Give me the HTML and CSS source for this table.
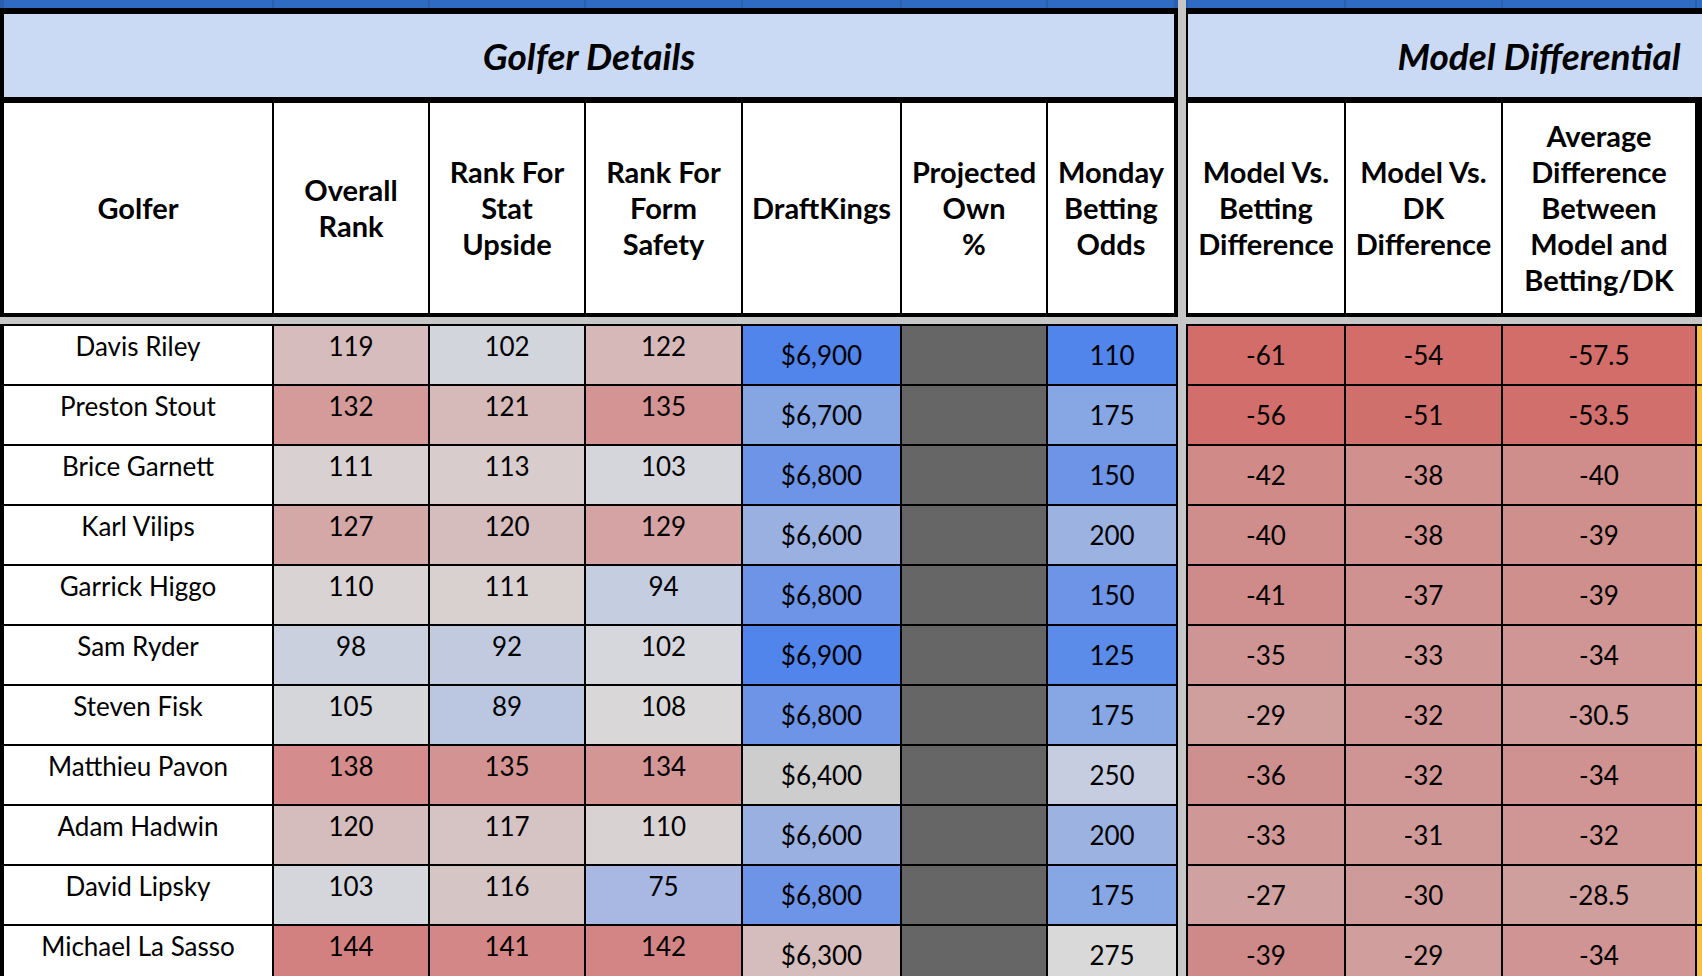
FILE: index.html
```html
<!DOCTYPE html>
<html lang="en">
<head>
<meta charset="utf-8">
<title>Golfer Details / Model Differential</title>
<link rel="stylesheet" href="styles.css">
</head>
<body>
<div class="sheet">
  <section class="block block-left">
    <div class="strip cols-left-head"><span></span><span></span><span></span><span></span><span></span><span></span><span></span></div>
    <div class="title title-left">Golfer Details</div>
    <div class="heads cols-left-head heads-left">
      <div class="h">Golfer</div>
      <div class="h">Overall<br>Rank</div>
      <div class="h">Rank For<br>Stat<br>Upside</div>
      <div class="h">Rank For<br>Form<br>Safety</div>
      <div class="h">DraftKings</div>
      <div class="h">Projected<br>Own<br>%</div>
      <div class="h">Monday<br>Betting<br>Odds</div>
    </div>
    <div class="spacer"></div>
    <div class="rows cols-left-data rows-left">
      <div class="c top name">Davis Riley</div>
      <div class="c top" style="background:#d6bcbc">119</div>
      <div class="c top" style="background:#d3d5dc">102</div>
      <div class="c top" style="background:#d6b8b8">122</div>
      <div class="c mid" style="background:#5185ec">$6,900</div>
      <div class="c own"></div>
      <div class="c mid" style="background:#5185ec">110</div>

      <div class="c top name">Preston Stout</div>
      <div class="c top" style="background:#d59b9b">132</div>
      <div class="c top" style="background:#d6baba">121</div>
      <div class="c top" style="background:#d49494">135</div>
      <div class="c mid" style="background:#85a5e3">$6,700</div>
      <div class="c own"></div>
      <div class="c mid" style="background:#86a6e4">175</div>

      <div class="c top name">Brice Garnett</div>
      <div class="c top" style="background:#d9d1d1">111</div>
      <div class="c top" style="background:#d8cccc">113</div>
      <div class="c top" style="background:#d4d6dc">103</div>
      <div class="c mid" style="background:#6d94e7">$6,800</div>
      <div class="c own"></div>
      <div class="c mid" style="background:#6d94e7">150</div>

      <div class="c top name">Karl Vilips</div>
      <div class="c top" style="background:#d5a8a8">127</div>
      <div class="c top" style="background:#d6bdbd">120</div>
      <div class="c top" style="background:#d5a3a3">129</div>
      <div class="c mid" style="background:#9ab0e0">$6,600</div>
      <div class="c own"></div>
      <div class="c mid" style="background:#9cb2e0">200</div>

      <div class="c top name">Garrick Higgo</div>
      <div class="c top" style="background:#d9d3d3">110</div>
      <div class="c top" style="background:#d9d0d0">111</div>
      <div class="c top" style="background:#c5cde0">94</div>
      <div class="c mid" style="background:#6d94e7">$6,800</div>
      <div class="c own"></div>
      <div class="c mid" style="background:#6d94e7">150</div>

      <div class="c top name">Sam Ryder</div>
      <div class="c top" style="background:#cad0de">98</div>
      <div class="c top" style="background:#c1cadf">92</div>
      <div class="c top" style="background:#d6d7dc">102</div>
      <div class="c mid" style="background:#5185ec">$6,900</div>
      <div class="c own"></div>
      <div class="c mid" style="background:#5b8cea">125</div>

      <div class="c top name">Steven Fisk</div>
      <div class="c top" style="background:#d5d6da">105</div>
      <div class="c top" style="background:#bbc7e1">89</div>
      <div class="c top" style="background:#d9d7d7">108</div>
      <div class="c mid" style="background:#6d94e7">$6,800</div>
      <div class="c own"></div>
      <div class="c mid" style="background:#86a6e4">175</div>

      <div class="c top name">Matthieu Pavon</div>
      <div class="c top" style="background:#d48c8c">138</div>
      <div class="c top" style="background:#d49393">135</div>
      <div class="c top" style="background:#d49595">134</div>
      <div class="c mid" style="background:#cdcdcd">$6,400</div>
      <div class="c own"></div>
      <div class="c mid" style="background:#c6cde0">250</div>

      <div class="c top name">Adam Hadwin</div>
      <div class="c top" style="background:#d6bdbd">120</div>
      <div class="c top" style="background:#d6c3c3">117</div>
      <div class="c top" style="background:#d9d2d2">110</div>
      <div class="c mid" style="background:#9ab0e0">$6,600</div>
      <div class="c own"></div>
      <div class="c mid" style="background:#9cb2e0">200</div>

      <div class="c top name">David Lipsky</div>
      <div class="c top" style="background:#d4d6dc">103</div>
      <div class="c top" style="background:#d6c5c5">116</div>
      <div class="c top" style="background:#a8b8e2">75</div>
      <div class="c mid" style="background:#6d94e7">$6,800</div>
      <div class="c own"></div>
      <div class="c mid" style="background:#86a6e4">175</div>

      <div class="c top name">Michael La Sasso</div>
      <div class="c top" style="background:#d38080">144</div>
      <div class="c top" style="background:#d38787">141</div>
      <div class="c top" style="background:#d38585">142</div>
      <div class="c mid" style="background:#d6bdbd">$6,300</div>
      <div class="c own"></div>
      <div class="c mid" style="background:#d9d9d9">275</div>
    </div>
  </section>

  <section class="block block-right">
    <div class="strip cols-right"><span></span><span></span><span></span><span></span></div>
    <div class="title title-right">Model Differential</div>
    <div class="heads cols-right heads-right">
      <div class="h">Model Vs.<br>Betting<br>Difference</div>
      <div class="h">Model Vs.<br>DK<br>Difference</div>
      <div class="h">Average<br>Difference<br>Between<br>Model and<br>Betting/DK</div>
      <div class="h h-next"></div>
    </div>
    <div class="spacer"></div>
    <div class="rows cols-right rows-right">
      <div class="c mid" style="background:#d36d6a">-61</div>
      <div class="c mid" style="background:#d36d6a">-54</div>
      <div class="c mid" style="background:#d36d6a">-57.5</div>
      <div class="c next"></div>

      <div class="c mid" style="background:#d26f6c">-56</div>
      <div class="c mid" style="background:#d0706d">-51</div>
      <div class="c mid" style="background:#d16f6c">-53.5</div>
      <div class="c next"></div>

      <div class="c mid" style="background:#d08a88">-42</div>
      <div class="c mid" style="background:#cf908e">-38</div>
      <div class="c mid" style="background:#cf8d8b">-40</div>
      <div class="c next"></div>

      <div class="c mid" style="background:#cf8d8b">-40</div>
      <div class="c mid" style="background:#cf908e">-38</div>
      <div class="c mid" style="background:#cf8f8d">-39</div>
      <div class="c next"></div>

      <div class="c mid" style="background:#cf8b89">-41</div>
      <div class="c mid" style="background:#cf9290">-37</div>
      <div class="c mid" style="background:#cf8f8d">-39</div>
      <div class="c next"></div>

      <div class="c mid" style="background:#cf9594">-35</div>
      <div class="c mid" style="background:#cf9897">-33</div>
      <div class="c mid" style="background:#cf9695">-34</div>
      <div class="c next"></div>

      <div class="c mid" style="background:#cf9f9e">-29</div>
      <div class="c mid" style="background:#cf9594">-32</div>
      <div class="c mid" style="background:#cf9a99">-30.5</div>
      <div class="c next"></div>

      <div class="c mid" style="background:#ce908f">-36</div>
      <div class="c mid" style="background:#cf9594">-32</div>
      <div class="c mid" style="background:#cf9291">-34</div>
      <div class="c next"></div>

      <div class="c mid" style="background:#cf9897">-33</div>
      <div class="c mid" style="background:#cf9998">-31</div>
      <div class="c mid" style="background:#cf9695">-32</div>
      <div class="c next"></div>

      <div class="c mid" style="background:#cfa2a1">-27</div>
      <div class="c mid" style="background:#cf9b9a">-30</div>
      <div class="c mid" style="background:#cf9f9e">-28.5</div>
      <div class="c next"></div>

      <div class="c mid" style="background:#ce8a89">-39</div>
      <div class="c mid" style="background:#cf9e9d">-29</div>
      <div class="c mid" style="background:#cf9493">-34</div>
      <div class="c next"></div>
    </div>
  </section>
</div>
</body>
</html>
```
FILE: styles.css
```css
html, body {
  margin: 0;
  padding: 0;
  overflow: hidden;
  background: #c7c7c7;
}

body {
  font-family: "Lato", "Open Sans", sans-serif;
  color: #000;
  width: 1702px;
  height: 976px;
}

.sheet {
  display: flex;
  gap: 8px;
  align-items: flex-start;
}

.block {
  flex: 0 0 auto;
  display: flex;
  flex-direction: column;
}

.block-left { width: 1178px; }
.block-right { width: 706px; }

/* column templates */
.cols-left-head {
  display: grid;
  grid-template-columns: 268px 154px 154px 155px 157px 144px 126px;
  column-gap: 2px;
}
.cols-left-data {
  display: grid;
  grid-template-columns: 268px 154px 154px 155px 157px 144px 128px;
  column-gap: 2px;
}
.cols-right {
  display: grid;
  grid-template-columns: 156px 155px 192px 195px;
  column-gap: 2px;
}

/* top blue strip (row above the table) */
.strip {
  height: 8px;
  background: #2a5eae;
}
.strip span { background: #306bc3; }
.block-left .strip { padding: 0 4px; }
.block-right .strip { padding-left: 2px; }

/* section titles */
.title {
  height: 83px;
  background: #cbdaf4;
  border-top: 6px solid #000;
  border-bottom: 6px solid #000;
  display: flex;
  align-items: center;
  justify-content: center;
  font-weight: 700;
  font-style: italic;
  font-size: 37px;
}
.title-left {
  border-left: 4px solid #000;
  border-right: 4px solid #000;
}
.title-right {
  border-left: 2px solid #000;
  border-right: 2px solid #000;
}

/* column headers */
.heads {
  background: #000;
  grid-template-rows: 210px;
  border-bottom: 4px solid #000;
}
.heads-left {
  border-left: 4px solid #000;
  border-right: 4px solid #000;
}
.heads-right {
  border-left: 2px solid #000;
}
.h {
  background: #fff;
  display: flex;
  align-items: center;
  justify-content: center;
  text-align: center;
  font-weight: 700;
  font-size: 29px;
  line-height: 36px;
}
.h-next {
  border-left: 5px solid #000;
}

.spacer {
  height: 7px;
}

/* data rows */
.rows {
  background: #000;
  grid-auto-rows: 58px;
  row-gap: 2px;
  border-top: 2px solid #000;
}
.rows-left {
  border-left: 4px solid #000;
  border-right: 2px solid #000;
}
.rows-right {
  border-left: 2px solid #000;
}

.c {
  background: #fff;
  font-size: 26px;
  line-height: 31px;
  text-align: center;
  white-space: nowrap;
  overflow: hidden;
}
.c.top {
  padding-top: 5px;
}
.c.mid {
  display: flex;
  align-items: center;
  justify-content: center;
}
.c.own {
  background: #666666;
}
.c.next {
  background: #f4c145;
}
```
